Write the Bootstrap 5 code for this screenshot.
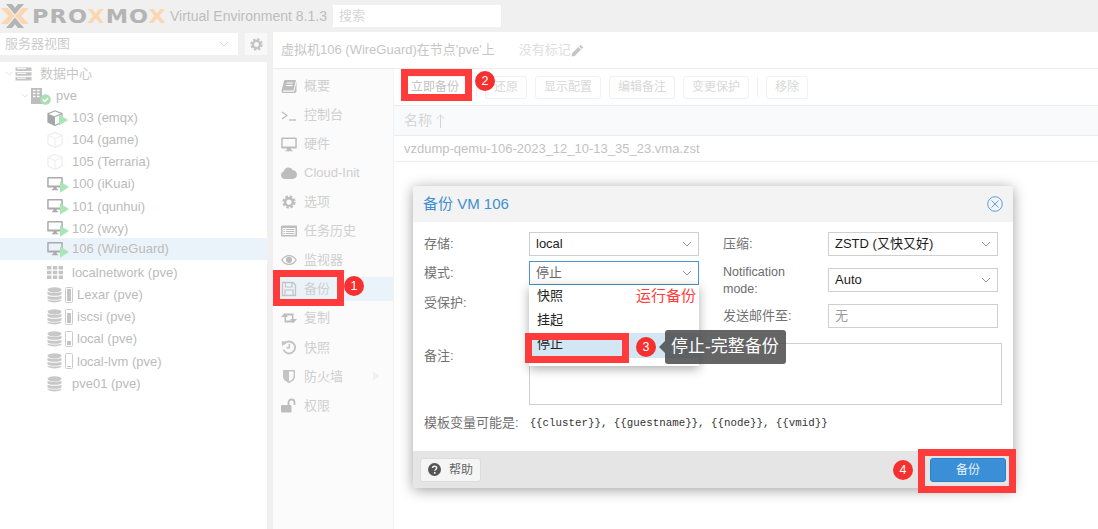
<!DOCTYPE html>
<html lang="zh">
<head>
<meta charset="utf-8">
<title>Proxmox</title>
<link href="https://cdn.jsdelivr.net/npm/bootstrap@5.3.0/dist/css/bootstrap.min.css" rel="stylesheet">
<style>
html,body{height:100%;overflow:hidden;background:#fff}
body{font-family:"Liberation Sans","Noto Sans CJK SC",sans-serif;font-size:13px;color:#bbb;line-height:1.2}
.stage{width:1098px;height:529px;position:relative;background:#f0f0f0;overflow:hidden}
.topbar{height:32px;padding-left:1px}
.wordmark{font-family:"DejaVu Sans",sans-serif;font-weight:700;font-size:20px;letter-spacing:1px;color:#b4b4b4;margin-left:3px;width:138px;white-space:nowrap;transform:scaleX(1.12);transform-origin:left center}
.wordmark b{color:#fbd6b0;font-weight:700}
.ve{font-size:14px;color:#bdbdbd;white-space:nowrap;width:163px}
.searchbox{width:168px;height:22px;background:#fff;padding:0 6px;color:#d6d6d6;font-size:13px}
.leftcol{width:267px}
.combo{width:238px;height:22px;background:#fff;padding:0 5px;font-size:13px;color:#cdcdcd}
.gearbtn{width:22px;height:22px;background:#f8f8f8;margin-left:7px}
.treebox{margin-top:7px;background:#fff;height:467px;padding-top:0}
.trow{height:22.15px;white-space:nowrap;padding-top:1px}
.trow.sel{background:#ebf3fa;margin-top:-1px;margin-bottom:1px;padding-top:0}
.lv0{padding-left:5px}.lv1{padding-left:21px}.lv2{padding-left:47px}
.rightcol{width:825px;margin-left:6px;background:#fff}
.titlebar{height:37px;padding-left:8px;border-bottom:1px solid #ececec;font-size:13px;color:#c6c6c6;white-space:nowrap}
.notag{font-size:13px;color:#dedede;margin-left:24px}
.sidenav{width:121px;height:460px;background:#fbfbfb;border-right:1px solid #f2f2f2;padding-top:4px;flex:none}
.navi{height:24px;margin-bottom:5.1px;padding-left:8px;position:relative;color:#cfcfcf;font-size:13px;padding-top:1px}
.navi.on{background:#ebf3fa}
.navi svg{width:16px;height:16px;margin-right:7px;flex:none}
.navi svg.gearsm{width:14px;height:14px;margin-left:1px;margin-right:8px}
.mainp{flex:1;min-width:0}
.tbar{height:37px;padding-left:8px;border-bottom:1px solid #ececec;gap:8px}
.tbtn{height:23px;border:1px solid #f1f1f1;border-radius:3px;padding:0 8px;background:#fff;font-size:12px;color:#d8d8d8;line-height:21px;white-space:nowrap}
.tsep{width:1px;height:20px;background:#eeeeee;margin:0}
.ghead{height:30px;background:#f9fafb;border-bottom:1px solid #ececec;padding-left:10px;font-size:14px;color:#d6d6d6}
.grow1{height:26px;border-bottom:1px solid #ececec;padding-left:10px;font-size:13px;color:#c2c2c2}
.dlg{position:absolute;left:413px;top:186px;width:600px;height:302px;background:#fff;border-radius:4px;box-shadow:0 2px 14px rgba(0,0,0,.38);color:#6f6f6f}
.dlghead{height:36px;background:#f3f3f3;border-radius:4px 4px 0 0;padding:0 10px;font-size:15px;color:#3e8fd2}
.dlgbody{padding:10px 11px 0;flex:1}
.lbl{width:105px;flex:none;color:#727272;font-size:13px}
.lbl2{width:105px;flex:none;color:#6d6d6d;font-size:12.5px;line-height:17px;font-weight:400;padding-top:2px;padding-right:30px}
.fld{width:170px;height:24px;border:1px solid #cfcfcf;background:#fff;padding:0 6px;color:#1c1c1c;font-size:13px;position:relative}
.fld.foc{border-color:#4a94cc;color:#666}
.fld.emp{color:#9b9b9b}
.fldrow{height:24px}
.colleft{width:299px}
.popl{position:absolute;left:-1px;top:23px;width:170px;height:81px;background:#fff;box-shadow:0 3px 10px rgba(0,0,0,.32);color:#222;font-size:13px;z-index:2}
.popi{height:24px;padding:0 8px}
.popi.first{height:22px;margin-bottom:1px}
.popi.cur{background:#d3e6f4;margin-top:1px;height:25px;padding-bottom:3px}
.runtxt{color:#ff3b3b;font-size:15px;margin-left:auto;margin-right:-5px;white-space:nowrap}
.notes{width:473px;height:62px;border:1px solid #cfcfcf;background:#fff}
.tvars{margin-top:9px;height:18px;font-size:13px;color:#707070}
.tmono{font-family:"Liberation Mono",monospace;font-size:10.8px;color:#333;margin-left:11px}
.dlgfoot{height:37px;background:#e5e5e5;border-radius:0 0 4px 4px;padding:0 7px}
.helpb{width:61px;height:24px;background:#f5f5f5;border:1px solid #dcdcdc;border-radius:3px;color:#666;font-size:12px;padding:0}
.saveb{width:76px;height:24px;background:#3a8fd6;border:1px solid #2f80c4;border-radius:3px;color:#e8f2fb;font-size:12px;padding:0}
.rbox{position:absolute;border:7px solid #ff3b3b;z-index:5}
.rnum{position:absolute;width:20px;height:20px;border-radius:50%;background:#f5302f;color:#fff;font-size:12.5px;z-index:6;line-height:20px;text-align:center}
.tipbox{position:absolute;left:665px;top:330px;width:121px;height:34px;background:rgba(72,72,72,.84);border-radius:3px;color:#fff;font-size:17px;z-index:6;padding-left:6px;white-space:nowrap}
.tipbox::before{content:"";position:absolute;left:-6px;top:11px;border-style:solid;border-width:6px 6px 6px 0;border-color:transparent rgba(72,72,72,.84) transparent transparent}
</style>
</head>
<body>
<svg width="0" height="0" class="position-absolute">
<defs>
<symbol id="chev" viewBox="0 0 10 6"><path d="M1 1l4 4 4-4" fill="none" stroke="currentColor" stroke-width="1"/></symbol>
<symbol id="gearic" viewBox="0 0 16 16"><circle cx="8" cy="8" r="4.4" fill="none" stroke="currentColor" stroke-width="2.8"/><circle cx="8" cy="8" r="6.3" fill="none" stroke="currentColor" stroke-width="2.6" stroke-dasharray="2.9 2.05"/></symbol>
<symbol id="book" viewBox="0 0 16 16"><path d="M4 2h11l-2.6 10.5H2.6c-.9 0-1 1.2-.1 1.2h10.6L15.5 4v9.5l-1.5 1.6H2.3C.9 15 .3 13.5.7 12L3 3c.1-.6.5-1 1-1z" fill="currentColor"/><path d="M5.5 5h6.5M5 7.5h6.5" stroke="#fbfbfb" stroke-width="1"/></symbol>
<symbol id="term" viewBox="0 0 16 16"><path d="M1 5l5 3.5L1 12" fill="none" stroke="currentColor" stroke-width="1.1"/><path d="M8 13h7" stroke="currentColor" stroke-width="1.3"/></symbol>
<symbol id="mon" viewBox="0 0 16 16"><path d="M1.2 1.5h13.6c.6 0 1 .4 1 1v9c0 .6-.4 1-1 1H10l.4 1.8h1.2v.9H4.400v-.9h1.2l.4-1.800H1.200c-.6 0-1-.4-1-1v-9c0-.6.4-1 1-1zM1.700 3v7.500h12.600V3z" fill="currentColor" fill-rule="evenodd"/></symbol>
<symbol id="cloud" viewBox="0 0 16 16"><path d="M4 14c-2.200 0-4-1.600-4-3.800 0-1.800 1.100-3.100 2.600-3.600C3 4.300 5 2.500 7.500 2.500c2 0 3.600 1.100 4.400 2.800 2.300 0 4.100 2 4.100 4.300 0 2.500-2 4.400-4.400 4.400z" fill="currentColor"/></symbol>
<symbol id="list" viewBox="0 0 16 16"><path d="M1 2.500h14c.5 0 1 .4 1 1v9c0 .6-.5 1-1 1H1c-.5 0-1-.4-1-1v-9c0-.6.5-1 1-1z" fill="currentColor"/><path d="M1.500 5h13v7h-13z" fill="#fbfbfb"/><path d="M2.500 6.500h1.500M5 6.500h8.500M2.500 8.500h1.500M5 8.500h8.500M2.500 10.500h1.500M5 10.500h8.500" stroke="currentColor" stroke-width="1.200"/></symbol>
<symbol id="eye" viewBox="0 0 16 16"><path d="M0 8c1.800-3 4.600-5 8-5s6.200 2 8 5c-1.800 3-4.600 5-8 5S1.800 11 0 8zm1.600 0c1.400 2.100 3.700 3.700 6.400 3.700s5-1.600 6.400-3.700C13 5.900 10.700 4.300 8 4.300S3 5.900 1.600 8z" fill="currentColor" fill-rule="evenodd"/><circle cx="8" cy="7.800" r="3.100" fill="currentColor"/></symbol>
<symbol id="floppy" viewBox="0 0 16 16"><path d="M1.500 1.500h10.500l2.500 2.500v10.500h-13z" fill="none" stroke="currentColor" stroke-width="1.300"/><path d="M4.500 1.500h6.500v4.500H4.500zM4 9h8v5.500H4z" fill="none" stroke="currentColor" stroke-width="1.200"/></symbol>
<symbol id="retw" viewBox="0 0 16 16"><path d="M3.500 3L7 7H5v3.500h5.500l2 2H3.500V7H0zM12.500 13L9 9h2V5.500H5.500l-2-2h9V9H16z" fill="currentColor"/></symbol>
<symbol id="hist" viewBox="0 0 16 16"><path d="M3 5.200A6 6 0 1 1 2.400 10.500" fill="none" stroke="currentColor" stroke-width="1.900"/><path d="M.8 2.300l5 .1-4.800 5z" fill="currentColor"/><path d="M8.300 4.800v4h-2.800" fill="none" stroke="currentColor" stroke-width="1.500"/></symbol>
<symbol id="shld" viewBox="0 0 16 16"><path d="M2 2h12v6.500c0 3.200-3 5.500-6 6.500-3-1-6-3.300-6-6.500z" fill="currentColor"/><path d="M8 3.500h4.500v5c0 2.200-2.200 3.900-4.500 4.800z" fill="#fbfbfb"/></symbol>
<symbol id="lock" viewBox="0 0 16 16"><rect x="0" y="7" width="10.500" height="7.500" rx="1" fill="currentColor"/><path d="M7.500 7V4.500a3 3 0 0 1 6 0V7" fill="none" stroke="currentColor" stroke-width="1.800"/></symbol>
<symbol id="srv" viewBox="0 0 16 14"><path d="M0 .5h16v3.500H0zM0 5.200h16v3.500H0zM0 10h16v3.500H0z" fill="currentColor"/><path d="M1.500 1.700h9M1.500 6.400h9M1.500 11.200h9" stroke="#fff" stroke-width="1"/></symbol>
<symbol id="node" viewBox="0 0 20 18"><path d="M0 1h11v16H0z" fill="#bdbdbd"/><path d="M2 3.500h2.500M6 3.500h2.500M2 6.500h2.500M6 6.500h2.500M2 9.500h2.500M6 9.500h2.500" stroke="#fff" stroke-width="1.300"/><circle cx="14.500" cy="12.500" r="5.300" fill="#a9e0b4"/><path d="M11.800 12.500l2 2 3.300-3.600" fill="none" stroke="#fff" stroke-width="1.500"/></symbol>
<symbol id="cube" viewBox="0 0 16 16"><path d="M8 .5l7 3v8.500l-7 3.500-7-3.500V3.500z" fill="none" stroke="currentColor" stroke-width="1.300"/><path d="M1 3.500L8 6.500l7-3M8 6.500V15" fill="none" stroke="currentColor" stroke-width="1.100"/></symbol>
<symbol id="cubeon" viewBox="0 0 22 16"><path d="M8 .8L15 3.700v8.400L8 15.500 1 12.100V3.700z" fill="#fff" stroke="#a6a6a6" stroke-width="1.200"/><path d="M1 3.700L8 6.500V15.500L1 12.100z" fill="#a6a6a6"/><path d="M8 6.500l7-2.800" stroke="#a6a6a6" stroke-width="1.100"/><path d="M12 4.500L21 10l-9 5.500z" fill="#a9e6b6"/></symbol>
<symbol id="vmon" viewBox="0 0 22 17"><path d="M1.200 1h13.600c.6 0 1 .4 1 1v8.500c0 .6-.4 1-1 1H9.500l.4 1.600h1v1.100H5.100v-1.100h1l.4-1.600H1.200c-.6 0-1-.4-1-1V2c0-.6.4-1 1-1zM1.700 2.500v7h12.600v-7z" fill="#ababab" fill-rule="evenodd"/><path d="M13 5.500L22 11l-9 5.700z" fill="#a9e6b6"/></symbol>
<symbol id="gridic" viewBox="0 0 16 13"><path d="M0 0h4.400v3.500H0zM5.800 0h4.400v3.500H5.800zM11.600 0H16v3.500h-4.400zM0 4.700h4.400v3.500H0zM5.800 4.700h4.400v3.500H5.800zM11.600 4.700H16v3.500h-4.400zM0 9.400h4.400v3.500H0zM5.800 9.400h4.400v3.500H5.800zM11.600 9.400H16v3.500h-4.400z" fill="#c4c4c4"/></symbol>
<symbol id="db" viewBox="0 0 15 16"><ellipse cx="7.500" cy="2.800" rx="7" ry="2.600" fill="#c8c8c8"/><path d="M.5 4.700c1.500 1.500 12.500 1.500 14 0v2.600c-1.500 2-12.500 2-14 0zM.5 8.700c1.500 1.500 12.500 1.500 14 0v2.600c-1.500 2-12.500 2-14 0zM.5 12.400c1.500 1.500 12.500 1.500 14 0v1.200c-1.500 2.400-12.500 2.400-14 0z" fill="#c8c8c8"/></symbol>
</defs>
</svg>

<div class="stage">
  <div class="topbar d-flex align-items-center">
    <svg width="28" height="26" viewBox="0 0 28 26" class="flex-none">
      <path d="M0 5h6.500l7.500 8-7.500 8H0l7.500-8z" fill="#fbd6b0"/>
      <path d="M28 5h-6.500L14 13l7.500 8H28l-7.500-8z" fill="#fbd6b0"/>
      <path d="M5 1h6l3 3.800L17 1h6l-9 10.500zM5 25h6l3-3.800 3 3.800h6l-9-10.500z" fill="#b4b4b4"/>
    </svg>
    <div class="wordmark">PRO<b>X</b>MO<b>X</b></div>
    <div class="ve ms-0">Virtual Environment 8.1.3</div>
    <div class="searchbox d-flex align-items-center">搜索</div>
  </div>
  <div class="d-flex">
    <div class="leftcol">
      <div class="d-flex" style="margin-top:1px">
        <div class="combo d-flex align-items-center justify-content-between">服务器视图<svg width="10" height="6" class="me-1" style="color:#d8d8d8"><use href="#chev"/></svg></div>
        <div class="gearbtn d-flex align-items-center justify-content-center" style="color:#c4c4c4"><svg width="13" height="13"><use href="#gearic"/></svg></div>
      </div>
      <div class="treebox">
        <div class="trow d-flex align-items-center lv0"><svg width="8" height="5" class="me-1" style="color:#ddd"><use href="#chev"/></svg><svg width="17" height="14" style="color:#c4c4c4;margin-right:8px;margin-left:-2px"><use href="#srv"/></svg><span style="color:#c8c8c8">数据中心</span></div>
        <div class="trow d-flex align-items-center lv1"><svg width="8" height="5" style="color:#ddd;margin-right:2px"><use href="#chev"/></svg><svg width="20" height="18" style="margin-right:5px"><use href="#node"/></svg><span>pve</span></div>
        <div class="trow d-flex align-items-center lv2"><svg width="22" height="16" style="margin-right:3px"><use href="#cubeon"/></svg><span>103 (emqx)</span></div>
        <div class="trow d-flex align-items-center lv2"><svg width="16" height="16" style="color:#eeeeee;margin-right:9px"><use href="#cube"/></svg><span>104 (game)</span></div>
        <div class="trow d-flex align-items-center lv2"><svg width="16" height="16" style="color:#eeeeee;margin-right:9px"><use href="#cube"/></svg><span>105 (Terraria)</span></div>
        <div class="trow d-flex align-items-center lv2"><svg width="22" height="17" style="margin-right:3px"><use href="#vmon"/></svg><span>100 (iKuai)</span></div>
        <div class="trow d-flex align-items-center lv2"><svg width="22" height="17" style="margin-right:3px"><use href="#vmon"/></svg><span>101 (qunhui)</span></div>
        <div class="trow d-flex align-items-center lv2"><svg width="22" height="17" style="margin-right:3px"><use href="#vmon"/></svg><span>102 (wxy)</span></div>
        <div class="trow sel d-flex align-items-center lv2"><svg width="22" height="17" style="margin-right:3px"><use href="#vmon"/></svg><span>106 (WireGuard)</span></div>
        <div class="trow d-flex align-items-center lv2"><svg width="16" height="13" style="margin-right:9px"><use href="#gridic"/></svg><span>localnetwork (pve)</span></div>
        <div class="trow d-flex align-items-center lv2"><svg width="15" height="16" style="margin-right:3px"><use href="#db"/></svg><svg width="8" height="16" viewBox="0 0 8 16" style="margin-right:4px"><rect x=".5" y=".5" width="7" height="15" rx="1" fill="#fff" stroke="#ccc"/><rect x="2" y="2" width="4" height="12" fill="#c4c4c4"/></svg><span>Lexar (pve)</span></div>
        <div class="trow d-flex align-items-center lv2"><svg width="15" height="16" style="margin-right:3px"><use href="#db"/></svg><svg width="8" height="16" viewBox="0 0 8 16" style="margin-right:4px"><rect x=".5" y=".5" width="7" height="15" rx="1" fill="#fff" stroke="#ccc"/><rect x="2" y="4" width="4" height="10" fill="#c4c4c4"/></svg><span>iscsi (pve)</span></div>
        <div class="trow d-flex align-items-center lv2"><svg width="15" height="16" style="margin-right:3px"><use href="#db"/></svg><svg width="8" height="16" viewBox="0 0 8 16" style="margin-right:4px"><rect x=".5" y=".5" width="7" height="15" rx="1" fill="#fff" stroke="#ccc"/><rect x="2" y="10" width="4" height="4" fill="#c4c4c4"/></svg><span>local (pve)</span></div>
        <div class="trow d-flex align-items-center lv2"><svg width="15" height="16" style="margin-right:3px"><use href="#db"/></svg><svg width="8" height="16" viewBox="0 0 8 16" style="margin-right:4px"><rect x=".5" y=".5" width="7" height="15" rx="1" fill="#fff" stroke="#ccc"/><rect x="2" y="13" width="4" height="1" fill="#c4c4c4"/></svg><span>local-lvm (pve)</span></div>
        <div class="trow d-flex align-items-center lv2"><svg width="15" height="16" style="margin-right:10px"><use href="#db"/></svg><span>pve01 (pve)</span></div>
      </div>
    </div>
    <div class="rightcol">
      <div class="titlebar d-flex align-items-center">虚拟机106 (WireGuard)在节点'pve'上
        <span class="notag">没有标记</span>
        <svg width="13" height="13" viewBox="0 0 13 13" style="color:#c6c6c6"><path d="M9.500 .8l2.700 2.700-1.400 1.400-2.700-2.700zM7.400 2.900l2.700 2.700-6.300 6.300-3.300.7.600-3.400z" fill="currentColor"/></svg>
      </div>
      <div class="d-flex">
        <div class="sidenav">
          <div class="navi d-flex align-items-center"><svg style="color:#bdbdbd"><use href="#book"/></svg>概要</div>
          <div class="navi d-flex align-items-center"><svg style="color:#b8b8b8"><use href="#term"/></svg>控制台</div>
          <div class="navi d-flex align-items-center"><svg style="color:#bdbdbd"><use href="#mon"/></svg>硬件</div>
          <div class="navi d-flex align-items-center"><svg style="color:#bdbdbd"><use href="#cloud"/></svg>Cloud-Init</div>
          <div class="navi d-flex align-items-center"><svg class="gearsm" style="color:#bdbdbd"><use href="#gearic"/></svg>选项</div>
          <div class="navi d-flex align-items-center"><svg style="color:#bdbdbd"><use href="#list"/></svg>任务历史</div>
          <div class="navi d-flex align-items-center"><svg style="color:#bdbdbd"><use href="#eye"/></svg>监视器</div>
          <div class="navi on d-flex align-items-center"><svg style="color:#c4c4c4"><use href="#floppy"/></svg>备份</div>
          <div class="navi d-flex align-items-center"><svg style="color:#bdbdbd"><use href="#retw"/></svg>复制</div>
          <div class="navi d-flex align-items-center"><svg style="color:#c4c4c4"><use href="#hist"/></svg>快照</div>
          <div class="navi d-flex align-items-center"><svg style="color:#c4c4c4"><use href="#shld"/></svg>防火墙<svg viewBox="0 0 6 10" class="ms-auto" style="width:6px;height:10px;margin-right:14px;color:#f0f0f0"><path d="M0 0l6 5-6 5z" fill="currentColor"/></svg></div>
          <div class="navi d-flex align-items-center"><svg style="color:#bdbdbd"><use href="#lock"/></svg>权限</div>
        </div>
        <div class="mainp">
          <div class="tbar d-flex align-items-center">
            <div class="tbtn" style="color:#c2c2c2">立即备份</div>
            <div class="tsep"></div>
            <div class="tbtn">还原</div>
            <div class="tbtn">显示配置</div>
            <div class="tbtn">编辑备注</div>
            <div class="tbtn">变更保护</div>
            <div class="tsep"></div>
            <div class="tbtn">移除</div>
          </div>
          <div class="ghead d-flex align-items-center">名称<svg width="9" height="14" viewBox="0 0 9 14" class="ms-1" style="color:#d6d6d6"><path d="M4.500 1v13M.7 4.800L4.500 1l3.800 3.800" fill="none" stroke="currentColor" stroke-width="1"/></svg></div>
          <div class="grow1 d-flex align-items-center">vzdump-qemu-106-2023_12_10-13_35_23.vma.zst</div>
        </div>
      </div>
    </div>
  </div>

  <div class="dlg d-flex flex-column">
    <div class="dlghead d-flex align-items-center justify-content-between">备份 VM 106
      <svg width="16" height="16" viewBox="0 0 16 16"><circle cx="8" cy="8" r="7.300" fill="none" stroke="#5aa2db" stroke-width="1"/><path d="M4.500 4.500l7 7M11.500 4.500l-7 7" stroke="#5aa2db" stroke-width="1"/></svg>
    </div>
    <div class="dlgbody d-flex flex-column">
      <div class="d-flex">
        <div class="colleft flex-none">
          <div class="fldrow d-flex align-items-center" style="margin-bottom:5px"><div class="lbl">存储:</div><div class="fld d-flex align-items-center justify-content-between">local<svg width="10" height="6" style="color:#999"><use href="#chev"/></svg></div></div>
          <div class="fldrow d-flex align-items-center" style="margin-bottom:6px"><div class="lbl">模式:</div><div class="fld foc d-flex align-items-center justify-content-between">停止<svg width="10" height="6" style="color:#999"><use href="#chev"/></svg>
            <div class="popl">
              <div class="popi first d-flex align-items-center">快照<span class="runtxt">运行备份</span></div>
              <div class="popi d-flex align-items-center">挂起</div>
              <div class="popi cur d-flex align-items-center">停止</div>
            </div></div></div>
          <div class="fldrow d-flex align-items-center"><div class="lbl">受保护:</div></div>
        </div>
        <div>
          <div class="fldrow d-flex align-items-center" style="margin-bottom:12px"><div class="lbl">压缩:</div><div class="fld d-flex align-items-center justify-content-between">ZSTD (又快又好)<svg width="10" height="6" style="color:#999"><use href="#chev"/></svg></div></div>
          <div class="fldrow d-flex align-items-center" style="margin-bottom:12px"><div class="lbl2">Notification mode:</div><div class="fld d-flex align-items-center justify-content-between">Auto<svg width="10" height="6" style="color:#999"><use href="#chev"/></svg></div></div>
          <div class="fldrow d-flex align-items-center"><div class="lbl">发送邮件至:</div><div class="fld emp d-flex align-items-center">无</div></div>
        </div>
      </div>
      <div class="d-flex" style="margin-top:15px">
        <div class="lbl" style="padding-top:5px">备注:</div>
        <div class="notes"></div>
      </div>
      <div class="tvars d-flex align-items-center">模板变量可能是:<span class="tmono">{{cluster}}, {{guestname}}, {{node}}, {{vmid}}</span></div>
    </div>
    <div class="dlgfoot d-flex align-items-center justify-content-between">
      <button type="button" class="btn helpb d-flex align-items-center justify-content-center gap-2"><svg width="13" height="13" viewBox="0 0 13 13"><circle cx="6.500" cy="6.500" r="6.500" fill="#555"/><path d="M4.500 5c0-2.500 4.200-2.500 4.200 0 0 1.500-1.900 1.500-1.900 2.800" fill="none" stroke="#f5f5f5" stroke-width="1.500"/><rect x="5.900" y="9" width="1.700" height="1.700" fill="#f5f5f5"/></svg>帮助</button>
      <button type="button" class="btn saveb">备份</button>
    </div>
  </div>

  <div class="rbox" style="left:273px;top:270px;width:71px;height:36px"></div>
  <div class="rnum" style="left:344px;top:276px">1</div>
  <div class="rbox" style="left:401px;top:69px;width:71px;height:32px"></div>
  <div class="rnum" style="left:475px;top:71px">2</div>
  <div class="rbox" style="left:525px;top:333px;width:104px;height:30px"></div>
  <div class="rnum" style="left:636px;top:337px">3</div>
  <div class="tipbox d-flex align-items-center">停止-完整备份</div>
  <div class="rbox" style="left:918px;top:449px;width:98px;height:44px"></div>
  <div class="rnum" style="left:893px;top:460px">4</div>
</div>
<script src="https://cdn.jsdelivr.net/npm/bootstrap@5.3.0/dist/js/bootstrap.bundle.min.js"></script>
</body>
</html>
